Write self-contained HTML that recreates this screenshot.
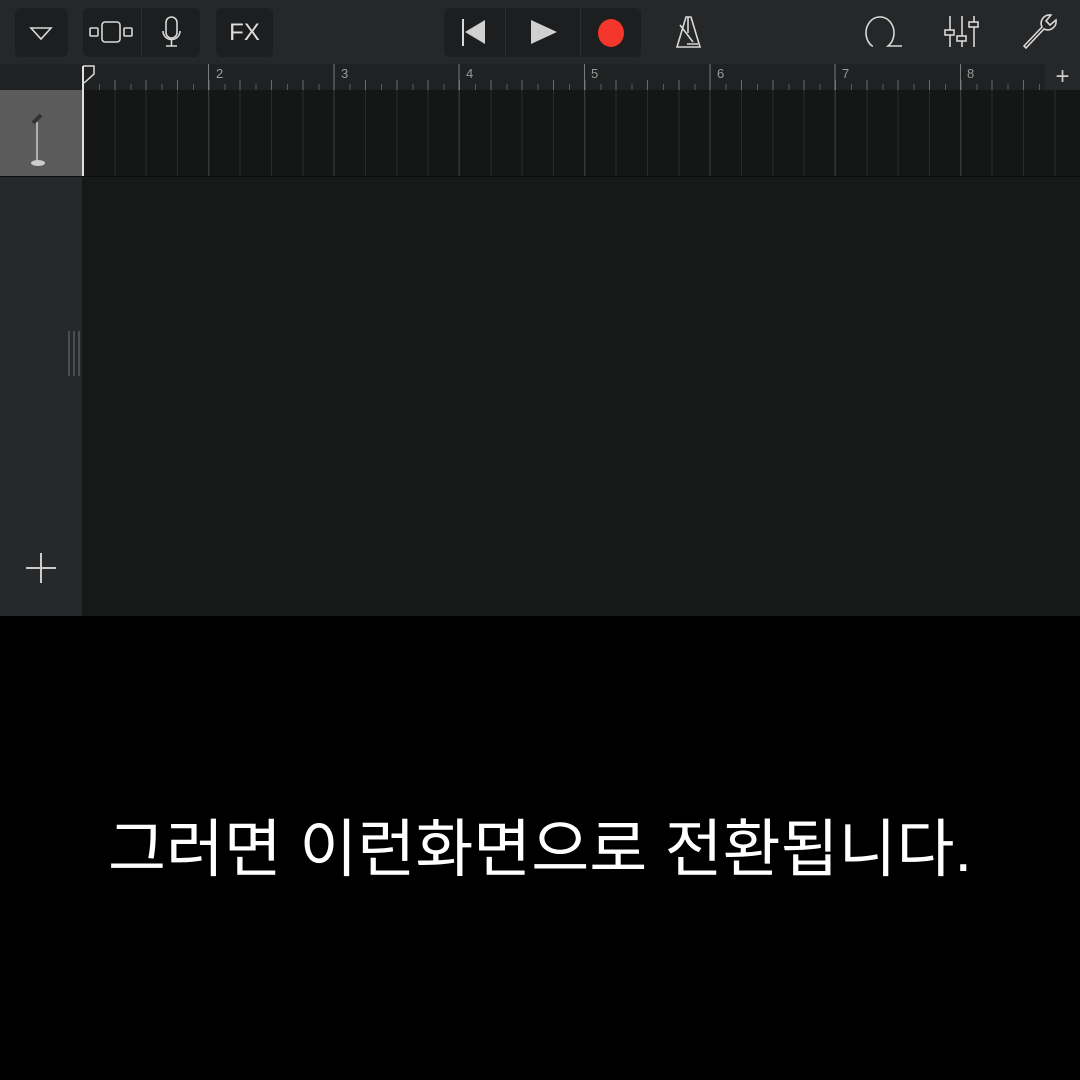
<!DOCTYPE html>
<html><head><meta charset="utf-8"><style>
*{margin:0;padding:0;box-sizing:border-box}
body{width:1080px;height:1080px;background:#000;position:relative;overflow:hidden;font-family:"Liberation Sans",sans-serif}
.abs{position:absolute}
.top{left:0;top:0;width:1080px;height:64px;background:#262728}
.btn{position:absolute;top:8px;height:49px;background:#1d1e1f;border-radius:6px}
.ruler{left:0;top:64px;width:1080px;height:26px;background:#202122}
.track{left:83px;top:90px;width:997px;height:87px;background:#151616}
.main{left:0;top:177px;width:1080px;height:439px;background:#171919}
.side{left:0;top:177px;width:82px;height:439px;background:#262829}
.cap{left:0;top:800px;width:1080px;text-align:center;color:#fff;font-size:63px;letter-spacing:0;font-family:"Liberation Sans","Noto Sans CJK KR",sans-serif;line-height:100px}
</style></head><body>
<div class="abs top"></div>
<div class="btn" style="left:15px;width:53px"></div>
<div class="btn" style="left:83px;width:117px"></div>
<div class="abs" style="left:141px;top:8px;width:1px;height:49px;background:#2c2d2e"></div>
<div class="btn" style="left:216px;width:57px"></div>
<div class="btn" style="left:444px;width:197px"></div>
<div class="abs" style="left:505px;top:8px;width:1px;height:49px;background:#2c2d2e"></div>
<div class="abs" style="left:580px;top:8px;width:1px;height:49px;background:#2c2d2e"></div>
<div class="abs" style="left:216px;top:8px;width:57px;height:49px;line-height:49px;text-align:center;color:#ddd;font-size:24px">FX</div>
<svg class="abs" style="left:0;top:0" width="1080" height="64" fill="none" stroke="#d8d8d8" stroke-width="1.6">
<path d="M31 28h20l-10 11z"/>
<rect x="90" y="28" width="8" height="8" rx="1"/><rect x="102" y="22" width="18" height="20" rx="3"/><rect x="124" y="28" width="8" height="8" rx="1"/>
<rect x="166" y="17" width="11" height="21" rx="5.5"/><path d="M163 31a8.5 8.5 0 0 0 17 0M171.5 40v6M166 46h11"/>
<path d="M463 19v27" stroke-width="2"/><path d="M465 32l20-12v24z" fill="#d0d0d0" stroke="none"/>
<path d="M531 20l26 12-26 12z" fill="#d0d0d0" stroke="none"/>
<ellipse cx="611" cy="33" rx="13" ry="14" fill="#f4362c" stroke="none"/>
<path d="M686 17h5l9 30h-23zM687 44h11M688 17v16M680 25l13 17"/>
<path d="M872 46a14 16 0 1 1 16 0h14M873 46h-1"/>
<path d="M950 16v31M962 16v31M974 16v31"/><rect x="945" y="30" width="9" height="5" fill="#262728"/><rect x="957" y="36" width="9" height="5" fill="#262728"/><rect x="969" y="22" width="9" height="5" fill="#262728"/>
<path d="M1024 46l18-19c-3-6 2-13 9-12l-5 6 4 4 6-5c1 7-6 12-12 9l-18 19z"/>
</svg>
<div class="abs ruler"></div>
<div class="abs" style="left:83px;top:80px;width:960px;height:10px;background:repeating-linear-gradient(90deg,#6a6b6c 0 1px,transparent 1px 31.333px)"></div>
<div class="abs" style="left:98.6px;top:84px;width:945px;height:6px;background:repeating-linear-gradient(90deg,#5a5b5c 0 1px,transparent 1px 31.333px)"></div>
<div class="abs" style="left:208px;top:64px;width:840px;height:26px;background:repeating-linear-gradient(90deg,#7a7b7c 0 1px,transparent 1px 125.333px)"></div>
<div class="abs" style="left:1045px;top:64px;width:35px;height:26px;background:#262728;color:#ccc;font-size:24px;text-align:center;line-height:26px">+</div>
<div class="abs" style="left:0;top:90px;width:83px;height:87px;background:#5b5b5b"></div>
<div class="abs track"></div>
<div class="abs" style="left:83px;top:90px;width:997px;height:87px;background:repeating-linear-gradient(90deg,#2a2c2c 0 1px,transparent 1px 31.333px)"></div>
<div class="abs" style="left:208px;top:90px;width:872px;height:87px;background:repeating-linear-gradient(90deg,#3a3c3c 0 1px,transparent 1px 125.333px)"></div>
<div class="abs" style="left:82px;top:66px;width:2px;height:111px;background:#e0e0e0"></div>
<svg class="abs" style="left:0;top:60px" width="1080" height="120" fill="none">
<path d="M83 6h11v8l-10 9" stroke="#ddd" stroke-width="1.5"/>
<g fill="#9a9a9a" font-size="13" font-family="Liberation Sans"><text x="216" y="18">2</text><text x="341" y="18">3</text><text x="466" y="18">4</text><text x="591" y="18">5</text><text x="717" y="18">6</text><text x="842" y="18">7</text><text x="967" y="18">8</text></g>
<path d="M37 62v40" stroke="#ccc" stroke-width="1.5"/><path d="M33 63l8-8" stroke="#333" stroke-width="4"/>
<ellipse cx="38" cy="103" rx="7" ry="3" fill="#ccc"/>
</svg>
<div class="abs" style="left:0;top:176px;width:1080px;height:2px;background:#0c0c0c"></div>
<div class="abs main"></div>
<div class="abs side"></div>
<div class="abs" style="left:68px;top:331px;width:2px;height:45px;background:#4a4c4d;box-shadow:5px 0 #4a4c4d,10px 0 #4a4c4d"></div>
<div class="abs" style="left:26px;top:567px;width:30px;height:2px;background:#ccc"></div>
<div class="abs" style="left:40px;top:553px;width:2px;height:30px;background:#ccc"></div>
<div class="abs cap">그러면 이런화면으로 전환됩니다.</div>
</body></html>
